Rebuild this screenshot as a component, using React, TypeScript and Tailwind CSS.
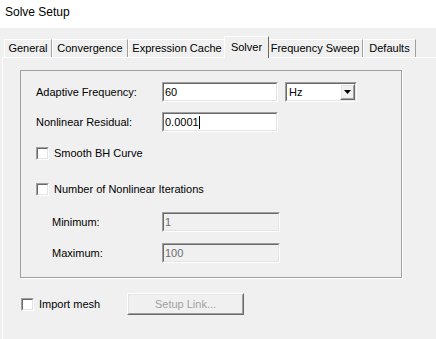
import React from "react";

const sunkOuter =
  "border border-t-[#a0a0a0] border-l-[#a0a0a0] border-r-white border-b-white";
const sunkInner =
  "border border-t-[#696969] border-l-[#696969] border-r-[#e3e3e3] border-b-[#e3e3e3]";
const raisedOuter =
  "border border-t-white border-l-white border-r-[#696969] border-b-[#696969]";
const raisedInner =
  "border border-t-[#e3e3e3] border-l-[#e3e3e3] border-r-[#a0a0a0] border-b-[#a0a0a0]";

function TextBox({
  value,
  width,
  disabled,
  caret,
}: {
  value: string;
  width: string;
  disabled?: boolean;
  caret?: boolean;
}) {
  return (
    <div className={`${sunkOuter} ${width} h-[20px]`}>
      <div
        className={`${sunkInner} h-full flex items-center pl-[1px] ${
          disabled ? "bg-[#f0f0f0] text-[#6d6d6d]" : "bg-white text-black"
        }`}
      >
        <span>{value}</span>
        {caret && <span className="w-px h-[13px] bg-black" />}
      </div>
    </div>
  );
}

function CheckBox({ label }: { label: string }) {
  return (
    <div className="flex items-center gap-[5px] h-[13px] leading-[13px]">
      <div className={`${sunkOuter} w-[13px] h-[13px]`}>
        <div className={`${sunkInner} w-full h-full bg-white`} />
      </div>
      <span>{label}</span>
    </div>
  );
}

const tabs = [
  { name: "General", w: "w-[48px]" },
  { name: "Convergence", w: "w-[76px]" },
  { name: "Expression Cache", w: "w-[98px]" },
  { name: "Solver", w: "w-[41px]", active: true },
  { name: "Frequency Sweep", w: "w-[96px]" },
  { name: "Defaults", w: "w-[53px]" },
];

export default function App() {
  return (
    <div
      className="w-[436px] h-[339px] bg-[#f0f0f0] overflow-hidden flex flex-col text-[11px] text-black"
      style={{ fontFamily: '"Liberation Sans", Arial, sans-serif' }}
    >
      {/* title */}
      <div className="h-[28px] bg-white flex items-center pl-[5px] text-[12px] pb-[4px]">
        Solve Setup
      </div>

      {/* tabs */}
      <div className="mt-[8px] h-[21px] flex items-end pl-[4px]">
        {tabs.map((t) =>
          t.active ? (
            <div
              key={t.name}
              className="relative z-10 -mb-px -mx-[2px] h-[22px] bg-[#f0f0f0] border-t border-l border-r border-t-white border-l-white border-r-[#696969] flex items-start justify-center pt-[2px] w-[45px]"
            >
              {t.name}
            </div>
          ) : (
            <div
              key={t.name}
              className={`${t.w} h-[18px] bg-[#f0f0f0] border-t border-l border-r border-t-white border-l-white border-r-[#a0a0a0] flex items-center justify-center pb-[1px]`}
            >
              {t.name}
            </div>
          )
        )}
      </div>

      {/* tab page */}
      <div className="flex-1 ml-[2px] border-t border-l border-white pl-[17px] pt-[12px] flex flex-col">
        <div className="w-[382px] h-[208px] border border-[#a0a0a0] shadow-[1px_1px_0_#ffffff] pt-[11px] pl-[15px] flex flex-col">
          <div className="flex items-center">
            <span className="w-[126px]">Adaptive Frequency:</span>
            <TextBox value="60" width="w-[116px]" />
            <div className={`${sunkOuter} w-[72px] h-[20px] ml-[7px]`}>
              <div className={`${sunkInner} h-full bg-white flex items-center pl-[2px] justify-between`}>
                <span>Hz</span>
                <div className={`${raisedOuter} w-[15px] h-[16px]`}>
                  <div className={`${raisedInner} w-full h-full bg-[#f0f0f0] flex items-center justify-center`}>
                    <svg width="7" height="4" viewBox="0 0 7 4">
                      <path d="M0 0h7L3.5 4z" fill="#000" />
                    </svg>
                  </div>
                </div>
              </div>
            </div>
          </div>

          <div className="flex items-center mt-[10px]">
            <span className="w-[126px]">Nonlinear Residual:</span>
            <TextBox value="0.0001" width="w-[116px]" caret />
          </div>

          <div className="mt-[15px]">
            <CheckBox label="Smooth BH Curve" />
          </div>

          <div className="mt-[23px]">
            <CheckBox label="Number of Nonlinear Iterations" />
          </div>

          <div className="flex items-center mt-[16px] pl-[16px]">
            <span className="w-[110px]">Minimum:</span>
            <TextBox value="1" width="w-[118px]" disabled />
          </div>

          <div className="flex items-center mt-[11px] pl-[16px]">
            <span className="w-[110px]">Maximum:</span>
            <TextBox value="100" width="w-[118px]" disabled />
          </div>
        </div>

        <div className="flex items-center mt-[15px] pl-[1px]">
          <div className="w-[106px]">
            <CheckBox label="Import mesh" />
          </div>
          <div className={`${raisedOuter} w-[117px] h-[22px]`}>
            <div className={`${raisedInner} w-full h-full flex items-center justify-center text-[#a0a0a0]`}>
              Setup Link...
            </div>
          </div>
        </div>
      </div>
    </div>
  );
}
